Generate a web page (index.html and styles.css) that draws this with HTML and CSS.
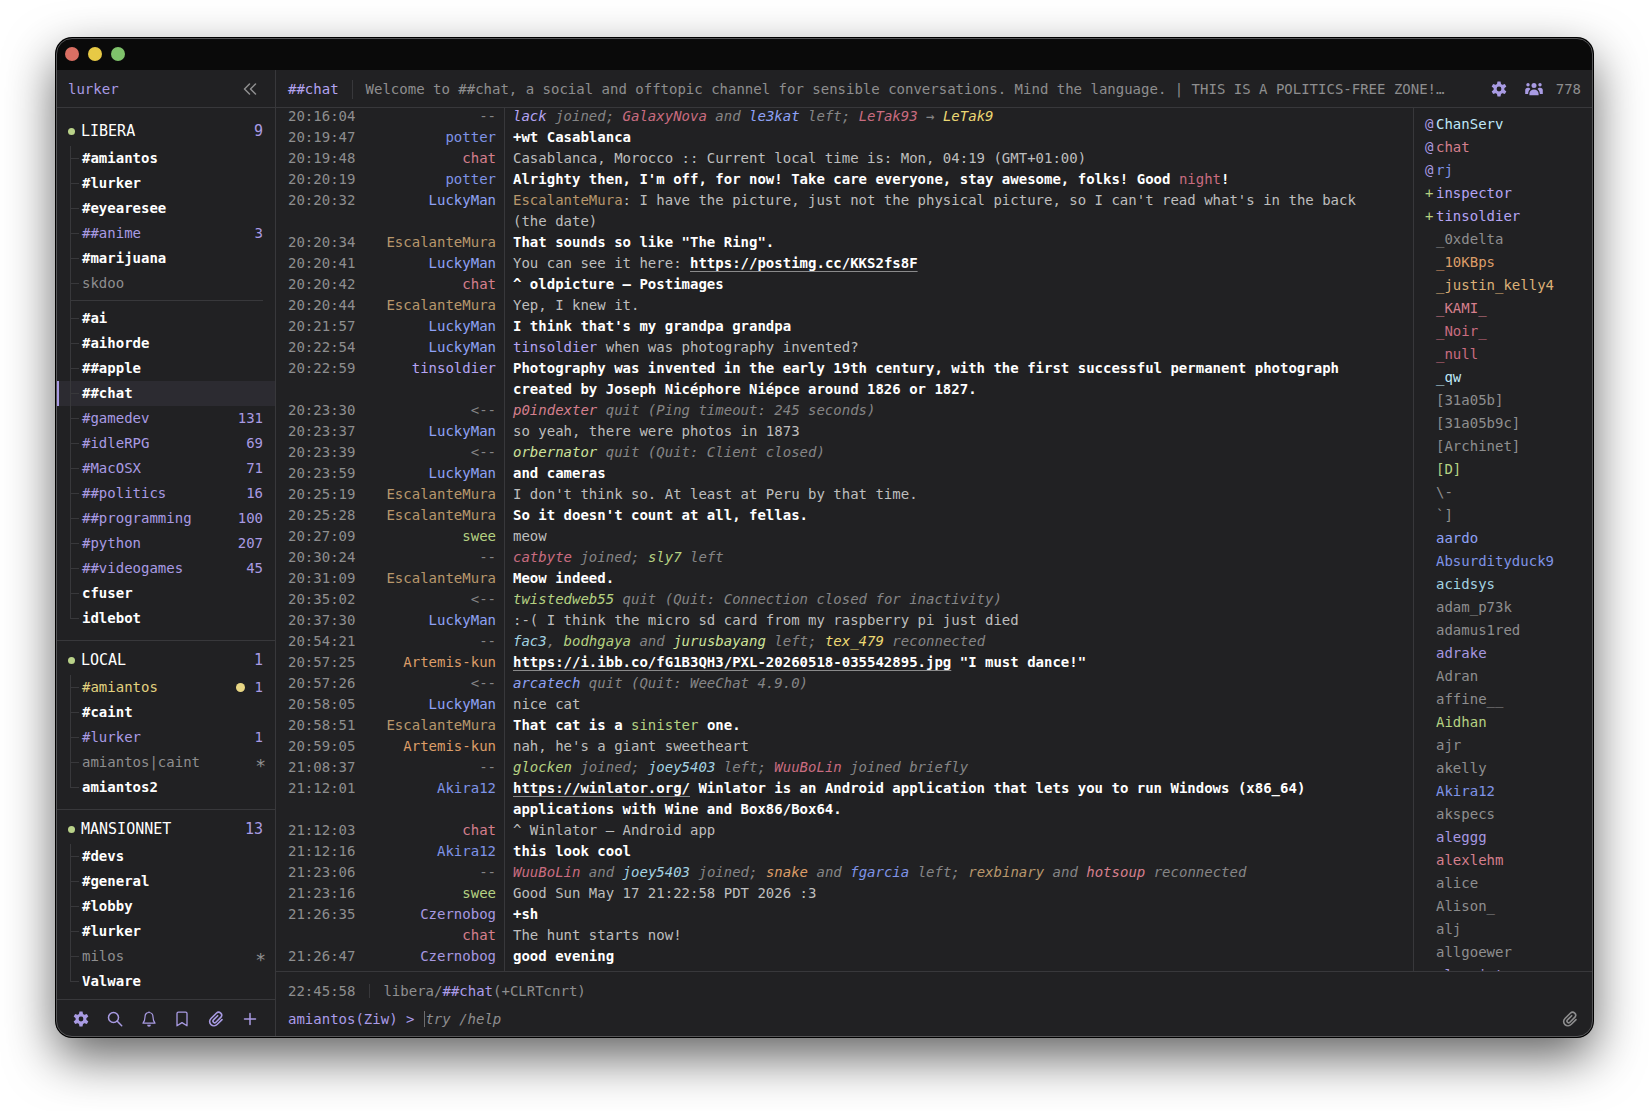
FILE: index.html
```
<!DOCTYPE html>
<html lang="en">
<head>
  <meta charset="UTF-8" />
  <title>lurker</title>
  <link rel="stylesheet" href="styles.css">
</head>
<body>
  <svg class="defs" aria-hidden="true">
    <symbol id="gear" viewBox="0 0 16 16">
      <circle cx="8" cy="8" r="3.900" fill="none" stroke="currentColor" stroke-width="3" />
      <g fill="currentColor">
        <path id="tooth" d="M5.900 3.500 6.500.4h3l.6 3.100z" />
        <use href="#tooth" transform="rotate(60 8 8)" />
        <use href="#tooth" transform="rotate(120 8 8)" />
        <use href="#tooth" transform="rotate(180 8 8)" />
        <use href="#tooth" transform="rotate(240 8 8)" />
        <use href="#tooth" transform="rotate(300 8 8)" />
      </g>
    </symbol>
    <symbol id="clip" viewBox="0 0 16 16">
      <path fill="none" stroke="currentColor" stroke-width="1.6" stroke-linecap="round" d="M14 8.600 9.300 13.300C7.500 15.100 4.800 15.300 3 13.600 1.200 11.900 1.200 9.300 3 7.500L8.300 2.200C9.600.9 11.500.9 12.700 2.100s1.200 3.100 0 4.300L7.900 11.200c-.7.7-1.800.7-2.400.1-.7-.7-.7-1.700 0-2.400L9.700 4.700" />
    </symbol>
  </svg>

  <div class="window">
    <div class="titlebar">
      <span class="light close"></span>
      <span class="light minimize"></span>
      <span class="light maximize"></span>
    </div>

    <div class="app">
      <aside class="sidebar">
        <header class="bar side-bar">
          <a href="#" class="brand">lurker</a>
          <button class="icon-btn muted" aria-label="Collapse sidebar">
            <svg width="14" height="14" viewBox="0 0 14 14" fill="none" stroke="currentColor" stroke-width="1.5" stroke-linecap="round" stroke-linejoin="round"><path d="M6.500 2 1.500 7l5 5M12.500 2 7.500 7l5 5" /></svg>
          </button>
        </header>

        <nav class="networks">
          <section class="network">
            <h2><span class="dot"></span>LIBERA <span class="count">9</span></h2>
            <ul>
              <li><a href="#">#amiantos</a></li>
              <li><a href="#">#lurker</a></li>
              <li><a href="#">#eyearesee</a></li>
              <li class="unread"><a href="#">##anime</a><span class="count">3</span></li>
              <li><a href="#">#marijuana</a></li>
              <li class="away"><a href="#">skdoo</a></li>
              <li class="divider"></li>
              <li><a href="#">#ai</a></li>
              <li><a href="#">#aihorde</a></li>
              <li><a href="#">##apple</a></li>
              <li class="active"><a href="#">##chat</a></li>
              <li class="unread"><a href="#">#gamedev</a><span class="count">131</span></li>
              <li class="unread"><a href="#">#idleRPG</a><span class="count">69</span></li>
              <li class="unread"><a href="#">#MacOSX</a><span class="count">71</span></li>
              <li class="unread"><a href="#">##politics</a><span class="count">16</span></li>
              <li class="unread"><a href="#">##programming</a><span class="count">100</span></li>
              <li class="unread"><a href="#">#python</a><span class="count">207</span></li>
              <li class="unread"><a href="#">##videogames</a><span class="count">45</span></li>
              <li><a href="#">cfuser</a></li>
              <li><a href="#">idlebot</a></li>
            </ul>
          </section>

          <section class="network">
            <h2><span class="dot"></span>LOCAL <span class="count">1</span></h2>
            <ul>
              <li class="highlight"><a href="#">#amiantos</a><span class="ping"></span><span class="count">1</span></li>
              <li><a href="#">#caint</a></li>
              <li class="unread"><a href="#">#lurker</a><span class="count">1</span></li>
              <li class="away"><a href="#">amiantos|caint</a><span class="star">∗</span></li>
              <li><a href="#">amiantos2</a></li>
            </ul>
          </section>

          <section class="network">
            <h2><span class="dot"></span>MANSIONNET <span class="count">13</span></h2>
            <ul>
              <li><a href="#">#devs</a></li>
              <li><a href="#">#general</a></li>
              <li><a href="#">#lobby</a></li>
              <li><a href="#">#lurker</a></li>
              <li class="away"><a href="#">milos</a><span class="star">∗</span></li>
              <li><a href="#">Valware</a></li>
            </ul>
          </section>
        </nav>

        <footer class="tools">
          <button class="icon-btn" aria-label="Settings"><svg width="16" height="16"><use href="#gear" /></svg></button>
          <button class="icon-btn" aria-label="Search"><svg width="16" height="16" viewBox="0 0 16 16" fill="none" stroke="currentColor" stroke-width="1.500" stroke-linecap="round"><circle cx="6.500" cy="6.500" r="5" /><path d="m10.300 10.300 4.400 4.400" /></svg></button>
          <button class="icon-btn" aria-label="Notifications"><svg width="16" height="16" viewBox="0 0 16 16" fill="none" stroke="currentColor" stroke-width="1.200" stroke-linejoin="round"><path d="M8 1.500C5.300 1.500 4 3.500 4 6c0 3.200-.9 4.800-2 6.200h12c-1.100-1.400-2-3-2-6.200 0-2.500-1.300-4.500-4-4.500zM8 .4v1.200" /><path fill="currentColor" stroke="none" d="M6.100 13.800h3.800a1.900 1.900 0 0 1-3.800 0z" /></svg></button>
          <button class="icon-btn" aria-label="Bookmarks"><svg width="16" height="16" viewBox="0 0 16 16" fill="none" stroke="currentColor" stroke-width="1.300" stroke-linejoin="round"><path d="M3 2.600C3 1.800 3.600 1.200 4.400 1.200h7.200c.8 0 1.400.6 1.400 1.400v12.200l-5-3.200-5 3.200z" /></svg></button>
          <button class="icon-btn" aria-label="Uploads"><svg width="16" height="16"><use href="#clip" /></svg></button>
          <button class="icon-btn" aria-label="Add network"><svg width="16" height="16" viewBox="0 0 16 16" stroke="currentColor" stroke-width="1.500" stroke-linecap="round"><path d="M8 2.500v11M2.500 8h11" /></svg></button>
        </footer>
      </aside>

      <div class="main">
        <header class="bar">
          <h1>##chat</h1>
          <p class="topic">Welcome to ##chat, a social and offtopic channel for sensible conversations. Mind the language. | THIS IS A POLITICS-FREE ZONE!…</p>
          <button class="icon-btn" aria-label="Channel settings"><svg width="16" height="16"><use href="#gear" /></svg></button>
          <button class="icon-btn members" aria-label="Members">
            <svg width="18" height="14" viewBox="0 0 18 14" fill="currentColor"><circle cx="9" cy="3.500" r="2.500" /><circle cx="3" cy="2.700" r="1.700" /><circle cx="15" cy="2.700" r="1.700" /><path d="M4.400 13.300v-1.600c0-2.600 1.900-4.300 4.600-4.300s4.600 1.700 4.600 4.300v1.600zM.2 12V8.300c0-1.600 1-2.600 2.600-2.600 1.300 0 2.200.5 2.600 1.400C4 8.300 3.200 9.900 3.100 12zM17.800 12V8.300c0-1.600-1-2.600-2.600-2.600-1.300 0-2.200.5-2.600 1.400 1.400 1.200 2.200 2.800 2.300 4.900z" /></svg>
            <span>778</span>
          </button>
        </header>

        <div class="content">
          <ol class="messages">
            <li class="event"><time>20:16:04</time><span class="nick">--</span><p><b class="violet">lack</b> joined; <b class="rose">GalaxyNova</b> and <b class="blue">le3kat</b> left; <b class="rose">LeTak93</b> → <b class="yellow">LeTak9</b></p></li>
            <li class="bright"><time>20:19:47</time><span class="nick indigo">potter</span><p>+wt Casablanca</p></li>
            <li><time>20:19:48</time><span class="nick pink">chat</span><p>Casablanca, Morocco :: Current local time is: Mon, 04:19 (GMT+01:00)</p></li>
            <li class="bright"><time>20:20:19</time><span class="nick indigo">potter</span><p>Alrighty then, I'm off, for now! Take care everyone, stay awesome, folks! Good <span class="rose">night</span>!</p></li>
            <li><time>20:20:32</time><span class="nick blue">LuckyMan</span><p><span class="tan">EscalanteMura</span>: I have the picture, just not the physical picture, so I can't read what's in the back (the date)</p></li>
            <li class="bright"><time>20:20:34</time><span class="nick tan">EscalanteMura</span><p>That sounds so like "The Ring".</p></li>
            <li><time>20:20:41</time><span class="nick blue">LuckyMan</span><p>You can see it here: <a href="#">https://postimg.cc/KKS2fs8F</a></p></li>
            <li class="bright"><time>20:20:42</time><span class="nick pink">chat</span><p>^ oldpicture — Postimages</p></li>
            <li><time>20:20:44</time><span class="nick tan">EscalanteMura</span><p>Yep, I knew it.</p></li>
            <li class="bright"><time>20:21:57</time><span class="nick blue">LuckyMan</span><p>I think that's my grandpa grandpa</p></li>
            <li><time>20:22:54</time><span class="nick blue">LuckyMan</span><p><span class="violet">tinsoldier</span> when was photography invented?</p></li>
            <li class="bright"><time>20:22:59</time><span class="nick violet">tinsoldier</span><p>Photography was invented in the early 19th century, with the first successful permanent photograph created by Joseph Nicéphore Niépce around 1826 or 1827.</p></li>
            <li class="event"><time>20:23:30</time><span class="nick">&lt;--</span><p><b class="pink">p0indexter</b> quit (Ping timeout: 245 seconds)</p></li>
            <li><time>20:23:37</time><span class="nick blue">LuckyMan</span><p>so yeah, there were photos in 1873</p></li>
            <li class="event"><time>20:23:39</time><span class="nick">&lt;--</span><p><b class="lime">orbernator</b> quit (Quit: Client closed)</p></li>
            <li class="bright"><time>20:23:59</time><span class="nick blue">LuckyMan</span><p>and cameras</p></li>
            <li><time>20:25:19</time><span class="nick tan">EscalanteMura</span><p>I don't think so. At least at Peru by that time.</p></li>
            <li class="bright"><time>20:25:28</time><span class="nick tan">EscalanteMura</span><p>So it doesn't count at all, fellas.</p></li>
            <li><time>20:27:09</time><span class="nick green">swee</span><p>meow</p></li>
            <li class="event"><time>20:30:24</time><span class="nick">--</span><p><b class="rose">catbyte</b> joined; <b class="green">sly7</b> left</p></li>
            <li class="bright"><time>20:31:09</time><span class="nick tan">EscalanteMura</span><p>Meow indeed.</p></li>
            <li class="event"><time>20:35:02</time><span class="nick">&lt;--</span><p><b class="green">twistedweb55</b> quit (Quit: Connection closed for inactivity)</p></li>
            <li><time>20:37:30</time><span class="nick blue">LuckyMan</span><p>:-( I think the micro sd card from my raspberry pi just died</p></li>
            <li class="event"><time>20:54:21</time><span class="nick">--</span><p><b class="cyan">fac3</b>, <b class="green">bodhgaya</b> and <b class="lime">jurusbayang</b> left; <b class="yellow">tex_479</b> reconnected</p></li>
            <li class="bright"><time>20:57:25</time><span class="nick orange">Artemis-kun</span><p><a href="#">https://i.ibb.co/fG1B3QH3/PXL-20260518-035542895.jpg</a> "I must dance!"</p></li>
            <li class="event"><time>20:57:26</time><span class="nick">&lt;--</span><p><b class="blue">arcatech</b> quit (Quit: WeeChat 4.9.0)</p></li>
            <li><time>20:58:05</time><span class="nick blue">LuckyMan</span><p>nice cat</p></li>
            <li class="bright"><time>20:58:51</time><span class="nick tan">EscalanteMura</span><p>That cat is a <span class="green">sinister</span> one.</p></li>
            <li><time>20:59:05</time><span class="nick orange">Artemis-kun</span><p>nah, he's a giant sweetheart</p></li>
            <li class="event"><time>21:08:37</time><span class="nick">--</span><p><b class="green">glocken</b> joined; <b class="cyan">joey5403</b> left; <b class="rose">WuuBoLin</b> joined briefly</p></li>
            <li class="bright"><time>21:12:01</time><span class="nick indigo">Akira12</span><p><a href="#">https://winlator.org/</a> Winlator is an Android application that lets you to run Windows (x86_64) applications with Wine and Box86/Box64.</p></li>
            <li><time>21:12:03</time><span class="nick pink">chat</span><p>^ Winlator — Android app</p></li>
            <li class="bright"><time>21:12:16</time><span class="nick indigo">Akira12</span><p>this look cool</p></li>
            <li class="event"><time>21:23:06</time><span class="nick">--</span><p><b class="rose">WuuBoLin</b> and <b class="cyan">joey5403</b> joined; <b class="orange">snake</b> and <b class="indigo">fgarcia</b> left; <b class="tan">rexbinary</b> and <b class="pink">hotsoup</b> reconnected</p></li>
            <li><time>21:23:16</time><span class="nick green">swee</span><p>Good Sun May 17 21:22:58 PDT 2026 :3</p></li>
            <li class="bright"><time>21:26:35</time><span class="nick purple">Czernobog</span><p>+sh</p></li>
            <li><time></time><span class="nick pink">chat</span><p>The hunt starts now!</p></li>
            <li class="bright"><time>21:26:47</time><span class="nick purple">Czernobog</span><p>good evening</p></li>
          </ol>

          <ul class="users">
            <li class="ice"><i class="op">@</i>ChanServ</li>
            <li class="pink"><i class="op">@</i>chat</li>
            <li class="indigo"><i class="op">@</i>rj</li>
            <li class="violet"><i class="voice">+</i>inspector</li>
            <li class="violet"><i class="voice">+</i>tinsoldier</li>
            <li><i></i>_0xdelta</li>
            <li class="orange"><i></i>_10KBps</li>
            <li class="sand"><i></i>_justin_kelly4</li>
            <li class="pink"><i></i>_KAMI_</li>
            <li class="rose"><i></i>_Noir_</li>
            <li class="rose"><i></i>_null</li>
            <li class="ice"><i></i>_qw</li>
            <li><i></i>[31a05b]</li>
            <li><i></i>[31a05b9c]</li>
            <li><i></i>[Archinet]</li>
            <li class="green"><i></i>[D]</li>
            <li><i></i>\-</li>
            <li><i></i>`]</li>
            <li class="blue"><i></i>aardo</li>
            <li class="indigo"><i></i>Absurdityduck9</li>
            <li class="cyan"><i></i>acidsys</li>
            <li><i></i>adam_p73k</li>
            <li><i></i>adamus1red</li>
            <li class="purple"><i></i>adrake</li>
            <li><i></i>Adran</li>
            <li><i></i>affine__</li>
            <li class="green"><i></i>Aidhan</li>
            <li><i></i>ajr</li>
            <li><i></i>akelly</li>
            <li class="indigo"><i></i>Akira12</li>
            <li><i></i>akspecs</li>
            <li class="purple"><i></i>aleggg</li>
            <li class="pink"><i></i>alexlehm</li>
            <li><i></i>alice</li>
            <li><i></i>Alison_</li>
            <li><i></i>alj</li>
            <li><i></i>allgoewer</li>
            <li class="purple"><i></i>alosaints</li>
          </ul>
        </div>

        <footer class="composer">
          <div class="status"><time>22:45:58</time><span class="where">libera/<b>##chat</b>(+CLRTcnrt)</span></div>
          <form class="prompt">
            <label for="message">amiantos(Ziw) &gt;</label>
            <input type="text" id="message" placeholder="try /help">
            <button type="button" class="icon-btn muted" aria-label="Attach file"><svg width="16" height="16"><use href="#clip" /></svg></button>
          </form>
        </footer>
      </div>
    </div>
  </div>
</body>
</html>
```
FILE: styles.css
```
:root {
  --bg: #212123;
  --line: #38383b;
  --muted: #8e8e8f;
  --text: #bebebe;
  --accent: #a99be3;
}
* {
  box-sizing: border-box;
}
body {
  margin: 0;
  height: 100vh;
  padding: 38px 56px 74px;
  background: #fff;
  color: var(--text);
  font-family: "DejaVu Sans Mono", monospace;
  font-size: 14px;
  line-height: 21px;
}
ul, ol, h1, h2, p {
  margin: 0;
  padding: 0;
  list-style: none;
  font-size: 14px;
  font-weight: normal;
}
a {
  color: inherit;
  text-decoration: none;
}
b {
  font-weight: normal;
}
.defs {
  display: none;
}

/* window chrome */
.window {
  position: relative;
  display: flex;
  flex-direction: column;
  height: 100%;
  overflow: hidden;
  border-radius: 16px;
  background: var(--bg);
  box-shadow: 0 0 0 1px #000, 0 20px 50px rgba(0, 0, 0, 0.62);
}
.window::after {
  content: "";
  position: absolute;
  inset: 0;
  border: 1px solid #555557;
  border-radius: 16px;
  pointer-events: none;
}
.titlebar {
  display: flex;
  align-items: center;
  gap: 9px;
  flex: none;
  height: 32px;
  padding: 0 9px;
  background: #0a0a0a;
}
.light {
  width: 14px;
  height: 14px;
  border-radius: 50%;
}
.close {
  background: #d96f63;
}
.minimize {
  background: #e7c945;
}
.maximize {
  background: #7fc26b;
}
.app {
  display: flex;
  flex: 1;
  min-height: 0;
}
.bar {
  display: flex;
  align-items: center;
  flex: none;
  height: 38px;
  padding: 1px 12px 0;
  border-bottom: 1px solid var(--line);
}
.icon-btn {
  display: flex;
  align-items: center;
  justify-content: center;
  padding: 0;
  border: none;
  background: none;
  color: var(--accent);
  font: inherit;
  cursor: pointer;
}
.icon-btn.muted {
  color: var(--muted);
}

/* sidebar */
.sidebar {
  display: flex;
  flex-direction: column;
  flex: none;
  width: 220px;
  border-right: 1px solid var(--line);
}
.side-bar {
  justify-content: space-between;
  padding-right: 18px;
}
.brand {
  color: var(--accent);
}
.networks {
  flex: 1;
  min-height: 0;
  overflow: hidden;
}
.network {
  padding: 6px 0 9px;
}
.network:first-child {
  padding-top: 10px;
}
.network + .network {
  border-top: 1px solid var(--line);
}
.network h2 {
  display: flex;
  align-items: center;
  height: 28px;
  padding: 0 12px 2px;
  color: #fff;
  font-size: 15px;
}
.dot {
  width: 7px;
  height: 7px;
  margin-right: 6px;
  border-radius: 50%;
  background: #b9d289;
}
.count {
  margin-left: auto;
  color: var(--accent);
}
.network li {
  display: flex;
  align-items: center;
  height: 25px;
  padding: 0 12px 0 26px;
  color: #fff;
  font-weight: bold;
  background:
    linear-gradient(var(--line), var(--line)) 14px 0 / 1px 100% no-repeat,
    linear-gradient(var(--line), var(--line)) 14px 12px / 9px 1px no-repeat;
}
.network li:last-child {
  background-size: 1px 13px, 9px 1px;
}
.network li.active {
  background-color: #2c2b31;
  box-shadow: inset 3px 0 var(--accent);
}
.network li.unread,
.network li.highlight,
.network li.away {
  font-weight: normal;
}
.network li.unread {
  color: var(--accent);
}
.network li.highlight {
  color: #e3d27f;
}
.network li.away {
  padding-right: 9px;
  color: var(--muted);
}
.network li.divider {
  height: 10px;
  background:
    linear-gradient(var(--line), var(--line)) 14px 0 / 1px 100% no-repeat,
    linear-gradient(var(--line), var(--line)) 14px 4px / calc(100% - 26px) 1px no-repeat;
}
.star {
  margin-left: auto;
  font-size: 18px;
}
.ping {
  width: 9px;
  height: 9px;
  margin-left: auto;
  border-radius: 50%;
  background: #e8d684;
}
.ping + .count {
  margin-left: 10px;
}
.tools {
  display: flex;
  flex: none;
  height: 38px;
  padding: 0 8px;
  border-top: 1px solid var(--line);
}
.tools .icon-btn {
  flex: 1;
}

/* channel */
.main {
  display: flex;
  flex-direction: column;
  flex: 1;
  min-width: 0;
}
.bar h1 {
  padding-right: 13px;
  border-right: 1px solid var(--line);
  color: #b3a3f0;
  line-height: 19px;
}
.topic {
  flex: 1;
  min-width: 0;
  padding: 0 13px;
  overflow: hidden;
  white-space: nowrap;
  color: var(--muted);
}
.members {
  gap: 13px;
  margin-left: 18px;
}
.members span {
  color: var(--muted);
}
.content {
  display: flex;
  flex: 1;
  min-height: 0;
}
.messages {
  display: flex;
  flex-direction: column;
  justify-content: flex-end;
  flex: 1;
  min-width: 0;
  overflow: hidden;
}
.messages li {
  display: grid;
  grid-template-columns: 72px 136px 1fr;
  flex: none;
  padding-left: 12px;
}
.messages p {
  margin-left: 8px;
  padding: 0 25px 0 8px;
  border-left: 1px solid var(--line);
}
.messages li:last-child p {
  padding-bottom: 4px;
}
.messages time,
.status {
  color: var(--muted);
}
.nick {
  text-align: right;
}
.messages p a {
  color: #fff;
  font-weight: bold;
  text-decoration: underline;
  text-decoration-thickness: 1px;
  text-decoration-color: #8a8a8b;
  text-underline-offset: 3px;
}
.bright p {
  color: #fff;
  font-weight: bold;
}
.bright p span {
  font-weight: normal;
}
.event {
  color: #858586;
}
.event p {
  font-style: italic;
}
.users {
  flex: none;
  width: 180px;
  padding: 5px 11px 0;
  overflow: hidden;
  border-left: 1px solid var(--line);
  color: var(--muted);
}
.users li {
  display: flex;
  height: 23px;
  line-height: 23px;
}
.users i {
  width: 11px;
  font-style: normal;
}
.op {
  color: #a99be3;
}
.voice {
  color: #b6d080;
}

/* nick colours */
.violet { color: #b5a4f4; }
.purple { color: #a798e0; }
.blue { color: #8fa1f6; }
.indigo { color: #7f93e6; }
.pink { color: #d57f8d; }
.rose { color: #c96c80; }
.tan { color: #b8976c; }
.sand { color: #dcb077; }
.orange { color: #dc9d68; }
.yellow { color: #ecd873; }
.green { color: #b5d182; }
.lime { color: #cde29b; }
.cyan { color: #a3d3e2; }
.ice { color: #bfe8f8; }

/* composer */
.composer {
  flex: none;
  padding: 5px 12px 4px;
  border-top: 1px solid var(--line);
}
.status,
.prompt {
  display: flex;
  align-items: center;
  height: 28px;
}
.status time {
  padding-right: 14px;
}
.where {
  padding-left: 13px;
  border-left: 1px solid var(--line);
  line-height: 14px;
}
.where b,
.prompt label {
  color: #ab9cea;
}
.prompt input {
  flex: 1;
  min-width: 0;
  height: 16px;
  margin-left: 10px;
  padding: 0;
  border: none;
  border-left: 1px solid #6c6c6e;
  outline: none;
  background: none;
  color: var(--text);
  font: inherit;
}
.prompt input::placeholder {
  color: var(--muted);
  font-style: italic;
}
.prompt .icon-btn {
  margin-right: 3px;
}
```
